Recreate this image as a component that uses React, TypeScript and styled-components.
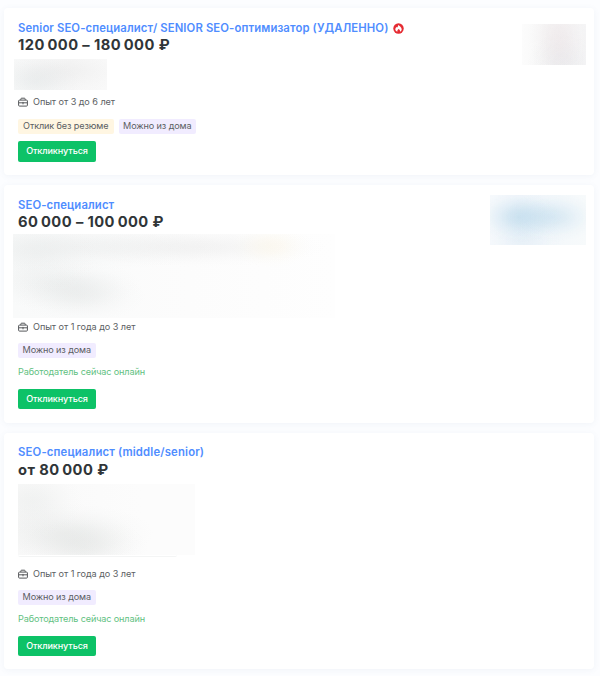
import React from 'react';
import styled, { createGlobalStyle } from 'styled-components';

const GlobalStyle = createGlobalStyle`
  * { box-sizing: border-box; }
  body {
    margin: 0;
    background: #fcfdff;
    font-family: Inter, "Noto Sans", sans-serif;
    color: #303538;
  }
`;

const Page = styled.main`
  width: 600px;
  height: 676px;
  padding: 8px 6.5px 0 4px;
  display: flex;
  flex-direction: column;
  gap: 10px;
  overflow: hidden;
`;

const Card = styled.article<{ $height: number }>`
  flex: none;
  display: flex;
  align-items: flex-start;
  justify-content: space-between;
  height: ${(p) => p.$height}px;
  padding: 11.5px 7.5px 0 14px;
  background: #fff;
  border-radius: 4px;
  box-shadow: 0 1px 6px rgba(90, 110, 150, 0.07);
`;

const Body = styled.div`
  display: flex;
  flex-direction: column;
  align-items: flex-start;
  white-space: nowrap;
`;

const TitleRow = styled.div`
  display: flex;
  align-items: center;
  gap: 5px;
  height: 16px;
`;

const Title = styled.a<{ $spacing: number }>`
  font-size: 11.3px;
  line-height: 16px;
  font-weight: 600;
  letter-spacing: ${(p) => p.$spacing}px;
  color: #4f8dff;
  text-decoration: none;
`;

const Salary = styled.div`
  height: 18px;
  margin-top: 0.5px;
  font-size: 14.7px;
  line-height: 18px;
  font-weight: 650;
  letter-spacing: 0.42px;
`;

const Experience = styled.div<{ $gap: number }>`
  display: flex;
  align-items: center;
  gap: 5px;
  height: 14px;
  margin-top: ${(p) => p.$gap}px;
  font-size: 9.1px;
  line-height: 14px;
  letter-spacing: -0.05px;
  color: #5b5e62;
`;

const Tags = styled.div`
  display: flex;
  gap: 5px;
  margin-top: 9.5px;
`;

const Tag = styled.span<{ $tone: 'cream' | 'violet'; $width: number }>`
  width: ${(p) => p.$width}px;
  height: 15px;
  border-radius: 2px;
  font-size: 9.1px;
  line-height: 14.5px;
  letter-spacing: -0.12px;
  text-align: center;
  color: #5b5e62;
  background: ${(p) => (p.$tone === 'cream' ? '#fff6e2' : '#f1ecff')};
`;

const Online = styled.div`
  height: 14px;
  margin-top: 7px;
  font-size: 9.1px;
  line-height: 14px;
  letter-spacing: -0.13px;
  color: #5fc181;
`;

const Apply = styled.button<{ $gap: number }>`
  width: 78px;
  height: 20.5px;
  margin-top: ${(p) => p.$gap}px;
  padding: 0 0 1px;
  border: 0;
  border-radius: 2px;
  background: #0dc267;
  color: #fff;
  font-family: inherit;
  font-size: 9.1px;
  line-height: 19px;
  letter-spacing: -0.13px;
  font-weight: 500;
`;

const haze = (w: number, h: number, x: number, y: number, rgb: string, a: number) =>
  `radial-gradient(ellipse ${w}px ${h}px at ${x}px ${y}px, rgba(${rgb}, ${a}), rgba(${rgb}, ${a * 0.8}) 25%, rgba(${rgb}, ${a * 0.42}) 52%, rgba(${rgb}, ${a * 0.12}) 78%, rgba(${rgb}, 0))`;

const CompanyBlur = styled.div`
  width: 93px;
  height: 30.5px;
  margin: 5px 0 0 -4px;
  background:
    ${haze(44, 24, 22, 23, '214,220,222', 0.32)},
    ${haze(75, 22, 44, 12, '220,220,220', 0.28)},
    linear-gradient(90deg, #f8f9f9, #f7f7f7 60%, #f9f9f9);
`;

const DescriptionBlur = styled.div`
  width: 322px;
  height: 83.5px;
  margin: 3px 0 0 -5px;
  background:
    ${haze(40, 22, 258, 12, '255,243,215', 0.28)},
    ${haze(130, 20, 185, 13, '222,222,222', 0.3)},
    ${haze(150, 24, 60, 13, '222,225,225', 0.32)},
    ${haze(60, 38, 24, 22, '222,226,226', 0.26)},
    ${haze(80, 26, 48, 50, '212,216,216', 0.28)},
    ${haze(65, 26, 68, 62, '212,216,215', 0.26)},
    linear-gradient(90deg, #f9fafa, #fcfcfc 55%, #fefefe);
`;

const AddressBlur = styled.div`
  width: 177px;
  height: 71px;
  margin-top: 5px;
  background:
    ${haze(50, 34, 15, 18, '215,220,218', 0.26)},
    ${haze(90, 30, 46, 49, '207,211,209', 0.3)},
    ${haze(65, 28, 66, 63, '207,211,209', 0.28)},
    linear-gradient(90deg, #f9f9f9, #fcfcfc 70%);
`;

const Divider = styled.div`
  width: 159px;
  height: 2.5px;
  border-bottom: 1px solid #f4f5f5;
  border-radius: 0 0 3px 3px;
`;

const GreyLogo = styled.div`
  width: 64px;
  height: 41.5px;
  margin-top: 4px;
  background:
    ${haze(30, 44, 37, 14, '233,222,225', 0.42)},
    ${haze(34, 30, 40, 38, '225,226,230', 0.45)},
    linear-gradient(90deg, #fcfcfc, #f6f6f6 40%, #f5f5f6);
`;

const BlueLogo = styled.div`
  width: 96.5px;
  height: 50px;
  margin-top: -1.5px;
  background:
    ${haze(42, 26, 29, 22, '170,208,230', 0.5)},
    ${haze(48, 25, 62, 22, '182,214,234', 0.45)},
    ${haze(40, 22, 34, 46, '215,230,242', 0.35)},
    linear-gradient(90deg, #f6f9fc, #f1f6fb 30%, #f7fafb);
`;

const CaseIcon = () => (
  <svg width="10" height="10" viewBox="0 0 10 10" fill="none" stroke="#56585b" strokeWidth="1">
    <path d="M2.8 3.1V2.1Q2.8 1.2 3.7 1.2H6.3Q7.2 1.2 7.2 2.1V3.1" />
    <rect x=".6" y="3.1" width="8.8" height="6" rx=".9" />
    <path d="M.7 5.8H9.3M5 4.9V7.3" />
  </svg>
);

const HotIcon = () => (
  <svg width="11" height="11" viewBox="0 0 11 11">
    <circle cx="5.5" cy="5.5" r="5.2" fill="#e52b32" />
    <path
      d="M5.1 2C6.6 2.8 8.7 4.4 8.7 6.3C8.7 7.5 8.1 8.3 7.1 8.8C7.1 7.3 6.7 6.6 5.6 6C4.8 6.6 4.3 7.3 4.3 8.8C3.1 8.3 2.3 7.5 2.3 6.3C2.3 5.4 2.8 4.6 3.5 4L4.1 4.6C4.8 4 5.1 3 5.1 2Z"
      fill="#fff"
    />
  </svg>
);

const HotBadge = styled.span`
  display: flex;
  padding-top: 1px;
`;

interface VacancyProps {
  height: number;
  title: string;
  titleSpacing?: number;
  salary: string;
  experience: string;
  experienceGap: number;
  hot?: boolean;
  quickReply?: boolean;
  online?: boolean;
  details: React.ReactNode;
  logo?: React.ReactNode;
}

const Vacancy = (v: VacancyProps) => (
  <Card $height={v.height}>
    <Body>
      <TitleRow>
        <Title $spacing={v.titleSpacing ?? 0.12}>{v.title}</Title>
        {v.hot && <HotBadge><HotIcon /></HotBadge>}
      </TitleRow>
      <Salary>{v.salary}</Salary>
      {v.details}
      <Experience $gap={v.experienceGap}>
        <CaseIcon />
        {v.experience}
      </Experience>
      <Tags>
        {v.quickReply && <Tag $tone="cream" $width={95.5}>Отклик без резюме</Tag>}
        <Tag $tone="violet" $width={77.5}>Можно из дома</Tag>
      </Tags>
      {v.online && <Online>Работодатель сейчас онлайн</Online>}
      <Apply $gap={v.online ? 9.5 : 7.5}>Откликнуться</Apply>
    </Body>
    {v.logo}
  </Card>
);

export default function App() {
  return (
    <>
      <GlobalStyle />
      <Page>
        <Vacancy
          height={167}
          title="Senior SEO-специалист/ SENIOR SEO-оптимизатор (УДАЛЕННО)"
          salary={'120\u2009000 – 180\u2009000 ₽'}
          experience="Опыт от 3 до 6 лет"
          experienceGap={5.5}
          hot
          quickReply
          details={<CompanyBlur />}
          logo={<GreyLogo />}
        />
        <Vacancy
          height={237.5}
          title="SEO-специалист"
          salary={'60\u2009000 – 100\u2009000 ₽'}
          experience="Опыт от 1 года до 3 лет"
          experienceGap={2}
          online
          details={<DescriptionBlur />}
          logo={<BlueLogo />}
        />
        <Vacancy
          height={236.5}
          title="SEO-специалист (middle/senior)"
          titleSpacing={0.17}
          salary={'от 80\u2009000 ₽'}
          experience="Опыт от 1 года до 3 лет"
          experienceGap={9.5}
          online
          details={<><AddressBlur /><Divider /></>}
        />
      </Page>
    </>
  );
}
